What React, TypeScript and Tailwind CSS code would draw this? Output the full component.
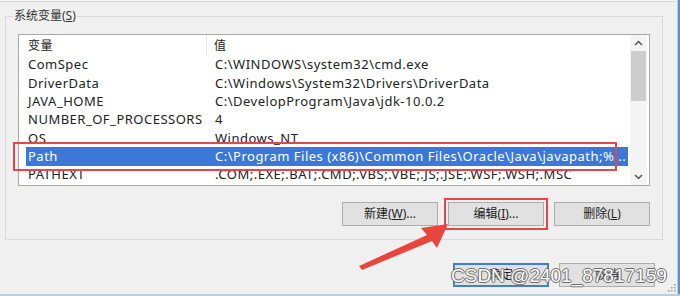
import React from "react";

const rows: [string, string][] = [
  ["ComSpec", "C:\\WINDOWS\\system32\\cmd.exe"],
  ["DriverData", "C:\\Windows\\System32\\Drivers\\DriverData"],
  ["JAVA_HOME", "C:\\DevelopProgram\\Java\\jdk-10.0.2"],
  ["NUMBER_OF_PROCESSORS", "4"],
  ["OS", "Windows_NT"],
  ["Path", "C:\\Program Files (x86)\\Common Files\\Oracle\\Java\\javapath;%..."],
  ["PATHEXT", ".COM;.EXE;.BAT;.CMD;.VBS;.VBE;.JS;.JSE;.WSF;.WSH;.MSC"],
];

const font = { fontFamily: '"Noto Sans", "Noto Sans CJK SC", sans-serif' };

const Btn: React.FC<{ label: React.ReactNode; primary?: boolean; boxed?: boolean }> = ({ label, primary, boxed }) => (
  <div className={boxed ? "border-2 border-[#e2474a] p-[2px] -m-[4px]" : ""}>
    <div
      className={`w-[96px] h-[24px] flex items-center justify-center text-[12px] text-[#222] bg-[#e1e1e1] border ${
        primary ? "border-[#3c7fd6] border-2" : "border-[#adadad]"
      }`}
    >
      {label}
    </div>
  </div>
);

export default function App() {
  return (
    <div className="relative w-[680px] h-[296px] overflow-hidden bg-[#f0f0f0]" style={font}>
      <div className="h-[2px] border-b border-[#d6d6d6] bg-[#f7f7f7] mr-[5px]" />
      <div className="flex h-[292px] mr-[5px]">
        <div className="flex-1 flex flex-col pl-[5px] pr-[12px]">
          <fieldset className="mt-[7px] border border-[#dadada] h-[231px] px-[12px] pt-[10px] flex flex-col">
            <legend className="-ml-[5px] px-[1px] text-[12px] text-[#333] leading-[14px]">
              系统变量(<span className="underline">S</span>)
            </legend>
            <div className="mt-[1px] h-[152px] border border-[#a9a9a9] bg-white flex text-[13px] tracking-[0.5px] text-[#222]">
              <div className="flex-1 flex flex-col pl-[7px]">
                <div className="h-[21px] flex items-center shrink-0">
                  <div className="w-[181px] pl-[2px] h-full flex items-center border-r border-[#e5e5e5] text-[12px]">变量</div>
                  <div className="pl-[7px] text-[12px]">值</div>
                </div>
                {rows.map(([k, v]) => {
                  const sel = k === "Path";
                  return (
                    <div
                      key={k}
                      className={`h-[18.3px] flex items-center shrink-0 mr-[2px] ${sel ? "bg-[#3b78d7] text-white" : ""}`}
                    >
                      <div className="w-[181px] pl-[2px] whitespace-nowrap">{k}</div>
                      <div className="pl-[8px] whitespace-nowrap">{v}</div>
                    </div>
                  );
                })}
              </div>
              <div className="w-[17px] flex flex-col bg-[#f4f4f4] mr-[2px]">
                <div className="h-[16px] flex items-center justify-center">
                  <svg width="9" height="6" viewBox="0 0 9 6">
                    <path d="M1 5 L4.5 1.5 L8 5" stroke="#555" strokeWidth="1.5" fill="none" />
                  </svg>
                </div>
                <div className="h-[50px] bg-[#cdcdcd] mx-[1px]" />
                <div className="flex-1" />
                <div className="h-[16px] flex items-center justify-center">
                  <svg width="9" height="6" viewBox="0 0 9 6">
                    <path d="M1 1 L4.5 4.5 L8 1" stroke="#555" strokeWidth="1.5" fill="none" />
                  </svg>
                </div>
              </div>
            </div>
            <div className="mt-[16px] flex justify-end gap-[10px] pr-[0px]">
              <Btn label={<span>新建(<span className="underline">W</span>)...</span>} />
              <Btn boxed label={<span>编辑(<span className="underline">I</span>)...</span>} />
              <Btn label={<span>删除(<span className="underline">L</span>)</span>} />
            </div>
          </fieldset>
          <div className="mt-[23px] flex justify-end gap-[10px] pr-[8px]">
            <Btn primary label="确定" />
            <Btn label="取消" />
          </div>
        </div>
      </div>
      {/* window border */}
      <div className="absolute right-0 top-0 w-[3px] h-full bg-[#5b8fd9] border-l border-[#c9c9c9]" />
      <div className="absolute left-0 bottom-0 w-full h-[2px] bg-[#b4cfe0]" />
      {/* red highlight on Path row */}
      <div className="absolute left-[13px] top-[142px] w-[604px] h-[29px] border-2 border-[#e2474a]" />
      {/* arrow */}
      <svg className="absolute left-0 top-0" width="680" height="296" viewBox="0 0 680 296">
        <polygon points="359,266 427,235 421,228 448,224 437,248 432,241 362,270" fill="#e8453c" />
      </svg>
      {/* resize grip */}
      <svg className="absolute left-[667px] top-[283px]" width="9" height="9" viewBox="0 0 9 9">
        <g fill="#9a9a9a">
          <rect x="7" y="1" width="1.5" height="1.5" />
          <rect x="4" y="4" width="1.5" height="1.5" />
          <rect x="7" y="4" width="1.5" height="1.5" />
          <rect x="1" y="7" width="1.5" height="1.5" />
          <rect x="4" y="7" width="1.5" height="1.5" />
          <rect x="7" y="7" width="1.5" height="1.5" />
        </g>
      </svg>
      {/* watermark */}
      <div
        className="absolute left-[451px] top-[265px] text-[19px] leading-[22px] text-white whitespace-nowrap"
        style={{
          fontFamily: '"Liberation Sans", Arial, sans-serif',
          textShadow: "1px 0 0 #6b6b6b, -1px 0 0 #6b6b6b, 0 1px 0 #6b6b6b, 0 -1px 0 #6b6b6b",
        }}
      >
        CSDN @2401_87817159
      </div>
    </div>
  );
}
